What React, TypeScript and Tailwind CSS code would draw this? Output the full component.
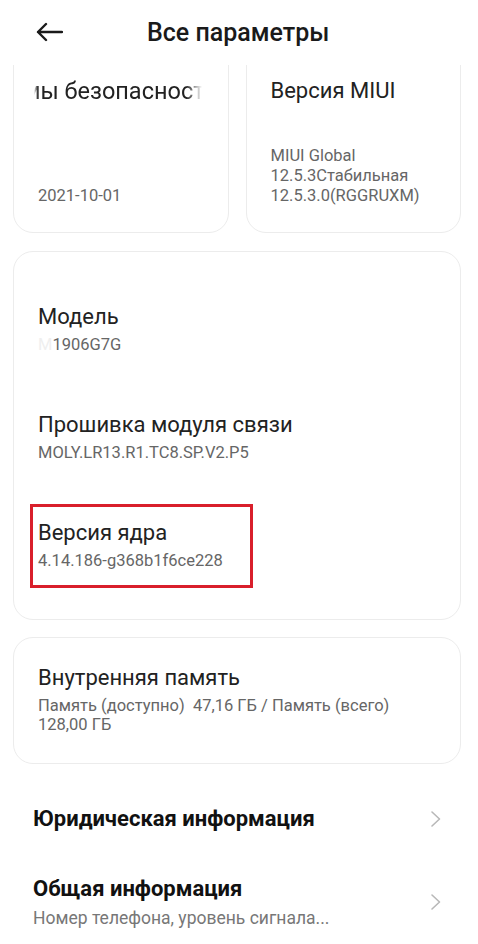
import React from "react";

function Chevron() {
  return (
    <svg width="12" height="18" viewBox="0 0 12 18" fill="none">
      <path d="M2 2 L9.5 9 L2 16" stroke="#b8b8b8" strokeWidth="1.6" strokeLinecap="round" strokeLinejoin="round" />
    </svg>
  );
}

export default function App() {
  return (
    <div className="w-[478px] h-[944px] overflow-hidden bg-white text-[#222]" style={{ fontFamily: "Roboto, 'Noto Sans', sans-serif" }}>
      <div className="relative z-10 h-[65px] bg-white flex items-center pl-[36px]">
        <svg width="27" height="20" viewBox="0 0 27 20" fill="none" className="mt-[-1px]">
          <path d="M2 10 H26 M10 2 L2 10 L10 18" stroke="#1a1a1a" strokeWidth="2.4" strokeLinecap="round" strokeLinejoin="round" />
        </svg>
        <div className="ml-[84px] text-[25px] font-medium leading-[30px] text-[#1a1a1a]">Все параметры</div>
      </div>

      <div className="pl-[13px] pr-[17px]">
        <div className="mt-[-20px] grid grid-cols-2 gap-[17px]">
          <div className="h-[188px] rounded-[20px] border border-[#ececec] flex flex-col justify-between pt-[31px] pb-[26px] pl-[20px] pr-[10px]">
            <div className="w-[168px] overflow-hidden whitespace-nowrap text-[23.5px] leading-[28px] [mask-image:linear-gradient(to_right,transparent_0px,black_4px,black_152px,transparent_168px)]">
              <span className="inline-block ml-[-11px]">мы безопасност</span>
            </div>
            <div className="pl-[4px] text-[16.5px] leading-[20px] text-[#666]">2021-10-01</div>
          </div>
          <div className="h-[188px] rounded-[20px] border border-[#ececec] flex flex-col justify-between pt-[31px] pb-[26px] pl-[24px] pr-[8px]">
            <div className="text-[22px] leading-[28px]">Версия MIUI</div>
            <div className="text-[16.5px] leading-[20px] text-[#666]">
              <div>MIUI Global</div>
              <div>12.5.3Стабильная</div>
              <div>12.5.3.0(RGGRUXM)</div>
            </div>
          </div>
        </div>

        <div className="relative mt-[18px] rounded-[20px] border border-[#ececec] pt-[51px] pb-[48px] pl-[24px] flex flex-col gap-[56px]">
          <div>
            <div className="text-[22px] leading-[28px]">Модель</div>
            <div className="text-[16.5px] leading-[20px] text-[#666] mt-[4px]"><span className="text-[#efefef]">M</span>1906G7G</div>
          </div>
          <div>
            <div className="text-[22px] leading-[28px]">Прошивка модуля связи</div>
            <div className="text-[16.5px] leading-[20px] text-[#666] mt-[4px]">MOLY.LR13.R1.TC8.SP.V2.P5</div>
          </div>
          <div>
            <div className="text-[22px] leading-[28px]">Версия ядра</div>
            <div className="text-[16.5px] leading-[20px] text-[#666] mt-[4px]">4.14.186-g368b1f6ce228</div>
          </div>
          <div className="absolute left-[16px] top-[252px] w-[223px] h-[84px] border-[3px] border-[#d91f2b]" />
        </div>

        <div className="mt-[17px] rounded-[20px] border border-[#ececec] pt-[26px] pb-[28px] pl-[24px] pr-[8px]">
          <div className="text-[22px] leading-[28px]">Внутренняя память</div>
          <div className="text-[16.5px] leading-[20px] text-[#666] mt-[4px]">
            <div className="whitespace-nowrap">Память (доступно)&nbsp; 47,16 ГБ / Память (всего)</div>
            <div className="mt-[-1px]">128,00 ГБ</div>
          </div>
        </div>
      </div>

      <div className="pl-[33px] pr-[36px]">
        <div className="mt-[41px] flex items-center justify-between h-[28px]">
          <div className="text-[22px] font-bold leading-[28px] text-[#111]">Юридическая информация</div>
          <Chevron />
        </div>
        <div className="mt-[42px] flex items-center justify-between">
          <div>
            <div className="text-[22px] font-bold leading-[28px] text-[#111]">Общая информация</div>
            <div className="text-[17.5px] leading-[22px] text-[#777] mt-[4px]">Номер телефона, уровень сигнала...</div>
          </div>
          <Chevron />
        </div>
      </div>
    </div>
  );
}
